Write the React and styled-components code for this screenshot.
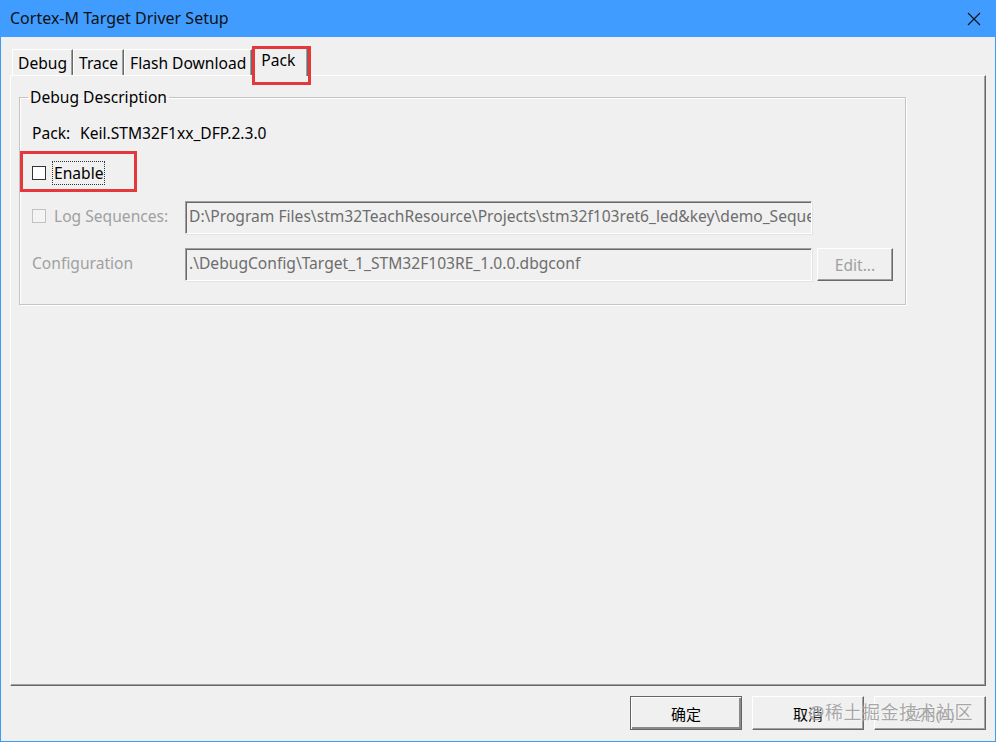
import React from "react";
import styled, { createGlobalStyle } from "styled-components";

const Global = createGlobalStyle`
  html, body {
    margin: 0;
    padding: 0;
    background: #f0f0f0;
  }
  body {
    font-family: "Noto Sans", "Noto Sans CJK SC", sans-serif;
    font-size: 15.6px;
    color: #000;
  }
`;

const Window = styled.div`
  width: 996px;
  height: 742px;
  box-sizing: border-box;
  display: flex;
  flex-direction: column;
  background: #f0f0f0;
  border: 1px solid #3d9bf0;
  border-top: none;
  position: relative;
`;

const TitleBar = styled.div`
  height: 37px;
  flex: none;
  margin: 0 -1px;
  background: #409dff;
  display: flex;
  align-items: center;
  justify-content: space-between;
  padding: 0 15px 0 10px;
`;

const Title = styled.div`
  font-size: 16px;
  color: #111;
  padding-bottom: 1px;
`;

const Close = styled.div`
  width: 14px;
  height: 14px;
  display: flex;
`;

const Body = styled.div`
  flex: 1;
  display: flex;
  flex-direction: column;
  padding: 10px 9px 0 9px;
`;

const TabStrip = styled.div`
  display: flex;
  align-items: flex-end;
  height: 28px;
  padding-left: 2px;
  position: relative;
  z-index: 1;
`;

const Tab = styled.div`
  position: relative;
  box-sizing: border-box;
  height: ${(p) => (p.$active ? "29px" : "26px")};
  margin-bottom: ${(p) => (p.$active ? "-1px" : "0")};
  padding: ${(p) => (p.$active ? "2px 12px 0 8px" : "3px 5px 0 5px")};
  background: #f0f0f0;
  border-top: 1px solid #fff;
  border-left: 1px solid #fff;
  border-right: 1px solid #696969;
  box-shadow: inset -1px 0 #a0a0a0;
  line-height: 20px;
  white-space: nowrap;
`;

const Mark = styled.div`
  position: absolute;
  border: 3px solid #e5383b;
  pointer-events: none;
`;

const Panel = styled.div`
  flex: 1;
  box-sizing: border-box;
  border-top: 1px solid #fff;
  border-left: 1px solid #fff;
  border-right: 1px solid #696969;
  border-bottom: 1px solid #696969;
  box-shadow: inset -1px -1px #a0a0a0;
  padding: 11px 0 0 8px;
`;

const Group = styled.fieldset`
  width: 887px;
  box-sizing: border-box;
  margin: 0;
  padding: 14px 0 23px 12px;
  border: 1px solid #c4c4c4;
  box-shadow: 1px 1px #fff, inset 1px 1px #fff;
  display: flex;
  flex-direction: column;
`;

const Legend = styled.legend`
  padding: 0 2px;
  margin-left: -4px;
  line-height: 20px;
`;

const Row = styled.div`
  position: relative;
  display: flex;
  align-items: center;
  height: ${(p) => p.$h || 24}px;
  margin-top: ${(p) => p.$mt || 0}px;
  color: ${(p) => (p.$dim ? "#a0a0a0" : "#000")};
`;

const PackLabel = styled.span`
  width: 48px;
`;

const Label = styled.div`
  width: 153px;
  flex: none;
  display: flex;
  align-items: center;
  padding-bottom: 3px;
`;

const Box = styled.span`
  width: 14px;
  height: 14px;
  box-sizing: border-box;
  flex: none;
  border: 1px solid ${(p) => (p.$dim ? "#c2c2c2" : "#333")};
  background: ${(p) => (p.$dim ? "#f4f4f4" : "#fff")};
  margin-right: 8px;
`;

const Focus = styled.span`
  outline: 1px dotted #333;
  outline-offset: 0;
  padding: 0 1px;
  margin-left: -1px;
  line-height: 22px;
`;

const Field = styled.div`
  width: 627px;
  height: 33px;
  box-sizing: border-box;
  border-top: 1px solid #a0a0a0;
  border-left: 1px solid #a0a0a0;
  border-right: 1px solid #fff;
  border-bottom: 1px solid #fff;
  box-shadow: inset 1px 1px #696969, 1px 1px #e3e3e3;
  padding: 3px 0 0 3px;
  color: #6d6d6d;
  white-space: nowrap;
  overflow: hidden;
`;

const SmallButton = styled.div`
  width: 76px;
  height: 33px;
  margin-left: 5px;
  box-sizing: border-box;
  border-top: 1px solid #fff;
  border-left: 1px solid #fff;
  border-right: 1px solid #696969;
  border-bottom: 1px solid #696969;
  box-shadow: inset -1px -1px #a0a0a0;
  display: flex;
  align-items: center;
  justify-content: center;
  color: #a0a0a0;
`;

const Footer = styled.div`
  height: 55px;
  flex: none;
  display: flex;
  justify-content: flex-end;
  align-items: flex-start;
  padding: 10px 0 0 0;
  box-sizing: border-box;
  gap: 10px;
  position: relative;
`;

const Button = styled.div`
  width: 112px;
  height: 34px;
  box-sizing: border-box;
  display: flex;
  align-items: center;
  justify-content: center;
  background: #f0f0f0;
  border: 1px solid;
  border-color: ${(p) =>
    p.$default ? "#646464" : "#fff #696969 #696969 #fff"};
  box-shadow: ${(p) =>
    p.$default
      ? "inset 1px 1px #fff, inset -2px -2px #8a8a8a"
      : "inset -1px -1px #a0a0a0"};
  color: ${(p) => (p.$dim ? "#a0a0a0" : "#000")};
  font-size: 15px;
`;

const Watermark = styled.div`
  position: absolute;
  right: 13px;
  top: 12px;
  font-size: 18px;
  letter-spacing: 0.5px;
  color: rgba(140, 140, 140, 0.75);
  text-shadow: 0 0 2px #fff;
  pointer-events: none;
`;

const CloseIcon = () => (
  <svg width="14" height="14" viewBox="0 0 14 14">
    <path d="M1 1 L13 13 M13 1 L1 13" stroke="#111" strokeWidth="1.1" fill="none" />
  </svg>
);

const tabs = ["Debug", "Trace", "Flash Download", "Pack"];

const App = () => {
  return (
    <>
      <Global />
      <Window>
        <TitleBar>
          <Title>Cortex-M Target Driver Setup</Title>
          <Close>
            <CloseIcon />
          </Close>
        </TitleBar>
        <Body>
          <TabStrip>
            {tabs.map((t) => (
              <Tab key={t} $active={t === "Pack"}>
                {t}
                {t === "Pack" && (
                  <Mark style={{ left: -1, top: -2, right: -4, bottom: -9 }} />
                )}
              </Tab>
            ))}
          </TabStrip>
          <Panel>
            <Group>
              <Legend>Debug Description</Legend>
              <Row>
                <PackLabel>Pack:</PackLabel>
                <span>Keil.STM32F1xx_DFP.2.3.0</span>
              </Row>
              <Row $mt={16}>
                <Box />
                <Focus>Enable</Focus>
                <Mark style={{ left: -12, top: -10, width: 117, height: 41, boxSizing: "border-box" }} />
              </Row>
              <Row $h={33} $mt={16} $dim>
                <Label>
                  <Box $dim />
                  Log Sequences:
                </Label>
                <Field>
                  D:\Program Files\stm32TeachResource\Projects\stm32f103ret6_led&amp;key\demo_Sequences.dbgconf
                </Field>
              </Row>
              <Row $h={33} $mt={14} $dim>
                <Label>Configuration</Label>
                <Field>.\DebugConfig\Target_1_STM32F103RE_1.0.0.dbgconf</Field>
                <SmallButton>Edit...</SmallButton>
              </Row>
            </Group>
          </Panel>
          <Footer>
            <Button $default>确定</Button>
            <Button>取消</Button>
            <Button $dim>应用(A)</Button>
            <Watermark>@稀土掘金技术社区</Watermark>
          </Footer>
        </Body>
      </Window>
    </>
  );
};

export default App;
